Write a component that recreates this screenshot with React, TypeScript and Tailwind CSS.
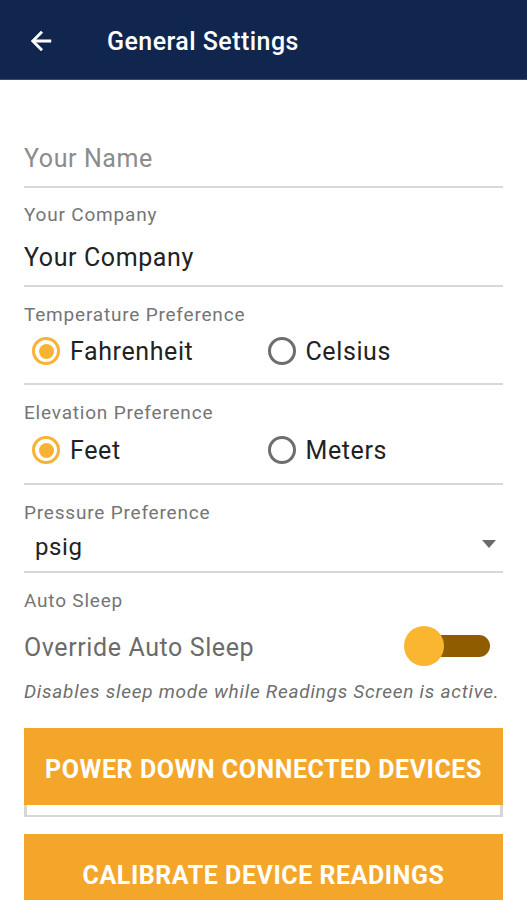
import React from 'react';

const font = { fontFamily: 'Roboto, "Noto Sans", Arial, sans-serif' };

function Radio({ checked, label }: { checked: boolean; label: string }) {
  return (
    <div className="flex items-center h-8 w-[238px]">
      <span
        className={`flex items-center justify-center w-[28px] h-[28px] rounded-full border-[3px] ${
          checked ? 'border-[#f9b233]' : 'border-[#6e6e6e]'
        }`}
      >
        {checked && <span className="w-[15px] h-[15px] rounded-full bg-[#f9b233]" />}
      </span>
      <span className="ml-[10px] pt-[2px] text-[25px] tracking-[0.6px] text-[#222]">{label}</span>
    </div>
  );
}

function Label({ children }: { children: React.ReactNode }) {
  return <div className="h-5 leading-5 text-[19px] tracking-[0.8px] text-[#757575]">{children}</div>;
}

function Divider() {
  return <div className="h-[2px] bg-[#d8d8d8]" />;
}

export default function App() {
  return (
    <div className="w-[527px] h-[900px] overflow-hidden bg-white" style={font}>
      {/* Toolbar */}
      <div className="h-20 bg-[#10264f] border-b border-[#3a4a6a] flex items-center">
        <svg className="ml-[26px] mt-[2px]" width="30" height="30" viewBox="0 0 24 24">
          <path d="M20 11H7.83l5.59-5.59L12 4l-8 8 8 8 1.41-1.41L7.83 13H20v-2z" fill="#fff" stroke="#fff" strokeWidth="0.4" />
        </svg>
        <span className="ml-[51px] mt-[5px] text-[25px] tracking-[0.45px] font-medium text-white">General Settings</span>
      </div>

      <div className="px-6">
        {/* Name */}
        <div className="pt-[63px] pb-[11px]">
          <div className="h-8 leading-8 text-[25px] tracking-[0.6px] text-[#8c8c8c]">Your Name</div>
        </div>
        <Divider />

        {/* Company */}
        <div className="pt-[17px] pb-[11px]">
          <Label>Your Company</Label>
          <div className="mt-[17px] h-8 leading-8 text-[25px] tracking-[0.6px] text-[#222]">Your Company</div>
        </div>
        <Divider />

        {/* Temperature */}
        <div className="pt-[18px] pb-[16px]">
          <Label>Temperature Preference</Label>
          <div className="mt-[10px] flex pl-[8px]">
            <Radio checked label="Fahrenheit" />
            <Radio checked={false} label="Celsius" />
          </div>
        </div>
        <Divider />

        {/* Elevation */}
        <div className="pt-[18px] pb-[17px]">
          <Label>Elevation Preference</Label>
          <div className="mt-[11px] flex pl-[8px]">
            <Radio checked label="Feet" />
            <Radio checked={false} label="Meters" />
          </div>
        </div>
        <Divider />

        {/* Pressure */}
        <div className="pt-[18px] pb-[9px]">
          <Label>Pressure Preference</Label>
          <div className="mt-[7px] h-8 flex items-center justify-between">
            <span className="pl-[11px] pt-[2px] text-[24px] tracking-[0.6px] text-[#222]">psig</span>
            <svg className="mr-[7px] mb-[4px]" width="14" height="9" viewBox="0 0 14 9">
              <path d="M0 0h14L7 8z" fill="#6b6b6b" />
            </svg>
          </div>
        </div>
        <Divider />

        {/* Auto sleep */}
        <div className="pt-[18px]">
          <Label>Auto Sleep</Label>
          <div className="mt-[15px] h-10 flex items-center justify-between">
            <span className="pt-[3px] text-[25px] tracking-[0.6px] text-[#6b6b6b]">Override Auto Sleep</span>
            <div className="relative w-[86px] h-10 mr-[13px] flex items-center">
              <div className="ml-[20px] w-[66px] h-[22px] rounded-full bg-[#8f5c00]" />
              <div className="absolute left-0 top-0 w-10 h-10 rounded-full bg-[#fbb631]" />
            </div>
          </div>
          <div className="mt-[16px] h-5 leading-5 text-[19px] tracking-[0.75px] italic text-[#6e6e6e] whitespace-nowrap">
            Disables sleep mode while Readings Screen is active.
          </div>
        </div>

        {/* Buttons */}
        <div className="mt-[26px]">
          <div className="h-[77px] bg-[#f4a62a] flex items-center justify-center">
            <span className="pt-[6px] text-[25px] font-bold text-white tracking-[0.55px] whitespace-nowrap">POWER DOWN CONNECTED DEVICES</span>
          </div>
          <div className="h-3 border-x-[3px] border-b-2 border-[#d6d6d6] bg-white" />
        </div>
        <div className="mt-[17px] h-[77px] bg-[#f4a62a] flex items-center justify-center">
          <span className="pt-[6px] text-[25px] font-bold text-white tracking-[0.55px] whitespace-nowrap">CALIBRATE DEVICE READINGS</span>
        </div>
      </div>
    </div>
  );
}
